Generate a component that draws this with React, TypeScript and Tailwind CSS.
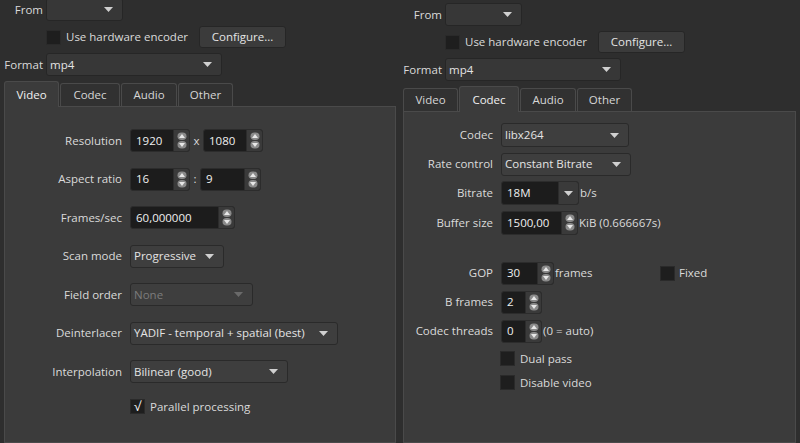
import React from "react";

const Arrow = ({ disabled = false }: { disabled?: boolean }) => (
  <svg width="9" height="5" viewBox="0 0 9 5" className="shrink-0">
    <path d="M0 0 L9 0 L4.5 5 Z" fill={disabled ? "#6a6a6a" : "#d0d0d0"} />
  </svg>
);

const SpinIcon = ({ dim = false }: { dim?: boolean }) => (
  <svg width="10" height="17" viewBox="0 0 10 17" className="shrink-0">
    <rect x="0.5" y="0.5" width="9" height="7.5" rx="4" fill={dim ? "#5a5a5a" : "#8a8a8a"} />
    <rect x="0.5" y="9" width="9" height="7.5" rx="4" fill={dim ? "#5a5a5a" : "#8a8a8a"} />
    <path d="M5 2 L8 6 L2 6 Z" fill="#e8e8e8" />
    <path d="M2 11 L8 11 L5 15 Z" fill="#e8e8e8" />
  </svg>
);

function Combo({
  w,
  text,
  h = 23,
  disabled = false,
  outer = false,
}: {
  w: number;
  text: string;
  h?: number;
  disabled?: boolean;
  outer?: boolean;
}) {
  return (
    <div
      className={`flex items-center justify-between rounded-[3px] border pl-[3px] pr-[9px] shrink-0 ${
        outer ? "bg-[#373737] border-[#262626]" : "bg-[#3e3e3e] border-[#2a2a2a]"
      } ${disabled ? "text-[#7c7c7c]" : "text-[#e4e4e4]"}`}
      style={{ width: w, height: h }}
    >
      <span className="whitespace-nowrap">{text}</span>
      <Arrow disabled={disabled} />
    </div>
  );
}

function Spin({ w, value, h = 23 }: { w: number; value: string; h?: number }) {
  return (
    <div
      className="flex items-stretch rounded-[3px] border border-[#2c2c2c] bg-[#1c1c1c] shrink-0 overflow-hidden"
      style={{ width: w, height: h }}
    >
      <div className="flex-1 flex items-center pl-[5px] text-[#f0f0f0] whitespace-nowrap">{value}</div>
      <div className="w-[16px] flex items-center justify-center bg-[#3a3a3a] border-l border-[#2c2c2c]">
        <SpinIcon />
      </div>
    </div>
  );
}

function EditCombo({ w, value }: { w: number; value: string }) {
  return (
    <div
      className="flex items-stretch rounded-[3px] border border-[#2c2c2c] bg-[#1c1c1c] shrink-0 overflow-hidden h-[24px]"
      style={{ width: w }}
    >
      <div className="flex-1 flex items-center pl-[5px] text-[#f0f0f0]">{value}</div>
      <div className="w-[20px] flex items-center justify-center bg-[#3a3a3a] border-l border-[#2c2c2c]">
        <Arrow />
      </div>
    </div>
  );
}

function Check({ checked = false }: { checked?: boolean }) {
  return (
    <div className="w-[15px] h-[15px] bg-[#1e1e1e] border border-[#2a2a2a] flex items-center justify-center shrink-0 text-[#f4f4f4] text-[13px] leading-none">
      {checked ? "√" : null}
    </div>
  );
}

function Tab({ label, selected, w }: { label: string; selected: boolean; w: number }) {
  return (
    <div
      className={`flex items-center justify-center rounded-t-[3px] border border-[#4a4a4a] ${
        selected
          ? "h-[26px] bg-[#3b3b3b] border-b-0 relative z-10 -mb-[1px] text-[#f0f0f0]"
          : "h-[23px] bg-[#313131] border-b-0 text-[#d6d6d6]"
      }`}
      style={{ width: w }}
    >
      {label}
    </div>
  );
}

function Header({ selected }: { selected: string }) {
  const tabs: [string, number][] = [
    ["Video", 55],
    ["Codec", 60],
    ["Audio", 56],
    ["Other", 55],
  ];
  return (
    <div className="flex flex-col">
      <div className="flex items-center h-[23px]">
        <div className="w-[43px] text-right">From</div>
        <div className="ml-[3px]">
          <Combo w={77} text="" outer />
        </div>
      </div>
      <div className="flex items-center h-[22px] mt-[5px]">
        <div className="ml-[46px] w-[153px] flex items-center">
          <Check />
          <span className="ml-[5px] whitespace-nowrap">Use hardware encoder</span>
        </div>
        <div className="w-[87px] h-[22px] rounded-[3px] border border-[#262626] bg-[#3b3b3b] flex items-center justify-center text-[#e4e4e4]">
          Configure...
        </div>
      </div>
      <div className="flex items-center h-[23px] mt-[5px]">
        <div className="w-[43px] text-right">Format</div>
        <div className="ml-[3px]">
          <Combo w={176} text="mp4" outer />
        </div>
      </div>
      <div className="flex items-end h-[25px] mt-[5px] ml-[4px] gap-[1px]">
        {tabs.map(([l, w]) => (
          <Tab key={l} label={l} w={w} selected={l === selected} />
        ))}
      </div>
    </div>
  );
}

function LRow({ label, children }: { label: string; children: React.ReactNode }) {
  return (
    <div className="flex items-center h-[23px]">
      <div className="w-[117px] text-right whitespace-nowrap">{label}</div>
      <div className="ml-[8px] flex items-center">{children}</div>
    </div>
  );
}

function RRow({ label, children, h = 23 }: { label: string; children: React.ReactNode; h?: number }) {
  return (
    <div className="flex items-center" style={{ height: h }}>
      <div className="w-[89px] text-right whitespace-nowrap">{label}</div>
      <div className="ml-[8px] flex items-center">{children}</div>
    </div>
  );
}

export default function App() {
  return (
    <div className="w-[800px] h-[443px] overflow-hidden bg-[#2e2e2e] flex text-[11.5px] text-[#dadada] font-['Open_Sans',sans-serif] leading-none">
      {/* Left panel */}
      <div className="w-[399px] shrink-0 flex flex-col -mt-[2px]">
        <Header selected="Video" />
        <div className="ml-[4px] w-[392px] h-[338px] bg-[#3b3b3b] border border-[#4a4a4a]">
          <div className="flex flex-col gap-[15.5px] pt-[22px]">
            <LRow label="Resolution">
              <Spin w={60} value="1920" />
              <span className="w-[13px] text-center">x</span>
              <Spin w={60} value="1080" />
            </LRow>
            <LRow label="Aspect ratio">
              <Spin w={60} value="16" />
              <span className="w-[10px] text-center">:</span>
              <Spin w={61} value="9" />
            </LRow>
            <LRow label="Frames/sec">
              <Spin w={105} value="60,000000" />
            </LRow>
            <LRow label="Scan mode">
              <Combo w={94} text="Progressive" />
            </LRow>
            <LRow label="Field order">
              <Combo w={123} text="None" disabled />
            </LRow>
            <LRow label="Deinterlacer">
              <Combo w={208} text="YADIF - temporal + spatial (best)" />
            </LRow>
            <LRow label="Interpolation">
              <Combo w={158} text="Bilinear (good)" />
            </LRow>
            <div className="flex items-center h-[16px] pl-[125px]">
              <Check checked />
              <span className="ml-[5px]">Parallel processing</span>
            </div>
          </div>
        </div>
      </div>

      {/* Right panel */}
      <div className="flex-1 flex flex-col pt-[3px]">
        <Header selected="Codec" />
        <div className="ml-[4px] w-[393px] h-[345px] bg-[#3b3b3b] border border-[#4a4a4a]">
          <div className="flex flex-col pt-[11px]">
            <div className="flex flex-col gap-[5.5px]">
              <RRow label="Codec" h={24}>
                <Combo w={128} h={24} text="libx264" />
              </RRow>
              <RRow label="Rate control">
                <Combo w={130} text="Constant Bitrate" />
              </RRow>
              <RRow label="Bitrate" h={24}>
                <EditCombo w={78} value="18M" />
                <span className="ml-[1px]">b/s</span>
              </RRow>
              <RRow label="Buffer size" h={24}>
                <Spin w={77} h={24} value="1500,00" />
                <span className="ml-[1px] whitespace-nowrap">KiB (0.666667s)</span>
              </RRow>
            </div>
            <div className="flex flex-col gap-[6px] mt-[27px]">
              <RRow label="GOP">
                <div className="w-[159px] flex items-center">
                  <Spin w={53} value="30" />
                  <span className="ml-[1px]">frames</span>
                </div>
                <Check />
                <span className="ml-[4px]">Fixed</span>
              </RRow>
              <RRow label="B frames">
                <Spin w={41} value="2" />
              </RRow>
              <RRow label="Codec threads">
                <Spin w={41} value="0" />
                <span className="ml-[1px] whitespace-nowrap">(0 = auto)</span>
              </RRow>
            </div>
            <div className="flex flex-col gap-[8px] mt-[8px] pl-[96px]">
              <div className="flex items-center h-[16px]">
                <Check />
                <span className="ml-[5px]">Dual pass</span>
              </div>
              <div className="flex items-center h-[16px]">
                <Check />
                <span className="ml-[5px]">Disable video</span>
              </div>
            </div>
          </div>
        </div>
      </div>
    </div>
  );
}
